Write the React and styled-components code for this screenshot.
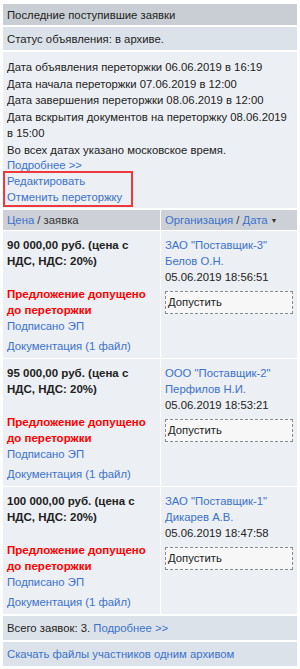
import React from "react";
import styled, { createGlobalStyle } from "styled-components";

const GlobalStyle = createGlobalStyle`
  body {
    margin: 0;
    background: #fff;
    font-family: "Liberation Sans", Arial, sans-serif;
    font-size: 11.3px;
    color: #222;
  }
`;

const Panel = styled.div`
  margin: 4px 3px 0 3px;
  display: flex;
  flex-direction: column;
  gap: 2px;
`;

const Bar = styled.div`
  background: ${p => p.bg || "#dce2ea"};
  height: ${p => p.h || 23}px;
  padding: 0 4px;
  display: flex;
  align-items: center;
  white-space: pre;
`;

const Info = styled.div`
  background: #eceff3;
  padding: 7px 4px 1px 4px;
  line-height: 16.5px;
`;

const More = styled.div`
  line-height: 14px;
`;

const A = styled.a`
  color: #3b72cc;
  text-decoration: none;
  cursor: pointer;
`;

const Actions = styled.div`
  display: flex;
  flex-direction: column;
  border: 2px solid #ee3a3f;
  width: 122px;
  margin: -1px 0 0 -4px;
  padding: 0 2px;
  line-height: 16px;
`;

const Table = styled.div`
  display: grid;
  grid-template-columns: 157px 1fr;
  column-gap: 1px;
  row-gap: 1px;
`;

const HeadCell = styled.div`
  background: #cdd1d7;
  height: 20px;
  padding: 0 4px;
  display: flex;
  align-items: center;
  white-space: pre;
  color: #333;
`;

const Cell = styled.div`
  background: #eceff3;
  padding: 6px 4px 4px 4px;
  line-height: 16px;
`;

const Price = styled.div`
  font-weight: bold;
  font-size: 11.5px;
  margin-bottom: 17px;
`;

const Warn = styled.div`
  font-weight: bold;
  color: #ff0000;
  font-size: 11.5px;
`;

const Doc = styled.div`
  margin-top: 4px;
`;

const Btn = styled.div`
  margin-top: 6px;
  border: 1px dashed #8a8a8a;
  background: #f7f7f7;
  height: 21px;
  line-height: 21px;
  padding: 0 2px;
  color: #222;
`;

const Arrow = styled.span`
  font-size: 7px;
  margin-left: 3px;
  color: #333;
`;

const bids = [
  {
    price: "90 000,00 руб. (цена с НДС, НДС: 20%)",
    org: "ЗАО \"Поставщик-3\"",
    person: "Белов О.Н.",
    date: "05.06.2019 18:56:51",
  },
  {
    price: "95 000,00 руб. (цена с НДС, НДС: 20%)",
    org: "ООО \"Поставщик-2\"",
    person: "Перфилов Н.И.",
    date: "05.06.2019 18:53:21",
  },
  {
    price: "100 000,00 руб. (цена с НДС, НДС: 20%)",
    org: "ЗАО \"Поставщик-1\"",
    person: "Дикарев А.В.",
    date: "05.06.2019 18:47:58",
  },
];

export default function App() {
  return (
    <>
      <GlobalStyle />
      <Panel>
        <Bar bg="#c9ced4" h={21}>Последние поступившие заявки</Bar>
        <Bar>Статус объявления: в архиве.</Bar>
        <Info>
          <div>Дата объявления переторжки 06.06.2019 в 16:19</div>
          <div>Дата начала переторжки 07.06.2019 в 12:00</div>
          <div>Дата завершения переторжки 08.06.2019 в 12:00</div>
          <div>Дата вскрытия документов на переторжку 08.06.2019 в 15:00</div>
          <div>Во всех датах указано московское время.</div>
          <More>
            <A>Подробнее &gt;&gt;</A>
          </More>
          <Actions>
            <A>Редактировать</A>
            <A>Отменить переторжку</A>
          </Actions>
        </Info>
        <Table>
          <HeadCell>
            <A>Цена</A> / заявка
          </HeadCell>
          <HeadCell>
            <A>Организация</A> / <A>Дата</A>
            <Arrow>▼</Arrow>
          </HeadCell>
          {bids.map(b => (
            <React.Fragment key={b.org}>
              <Cell>
                <Price>{b.price}</Price>
                <Warn>Предложение допущено до переторжки</Warn>
                <div>
                  <A>Подписано ЭП</A>
                </div>
                <Doc>
                  <A>Документация (1 файл)</A>
                </Doc>
              </Cell>
              <Cell>
                <div>
                  <A>{b.org}</A>
                </div>
                <div>
                  <A>{b.person}</A>
                </div>
                <div>{b.date}</div>
                <Btn>Допустить</Btn>
              </Cell>
            </React.Fragment>
          ))}
        </Table>
        <Bar h={24}>
          Всего заявок: 3. <A>Подробнее &gt;&gt;</A>
        </Bar>
        <Bar h={24}>
          <A>Скачать файлы участников одним архивом</A>
        </Bar>
      </Panel>
    </>
  );
}
